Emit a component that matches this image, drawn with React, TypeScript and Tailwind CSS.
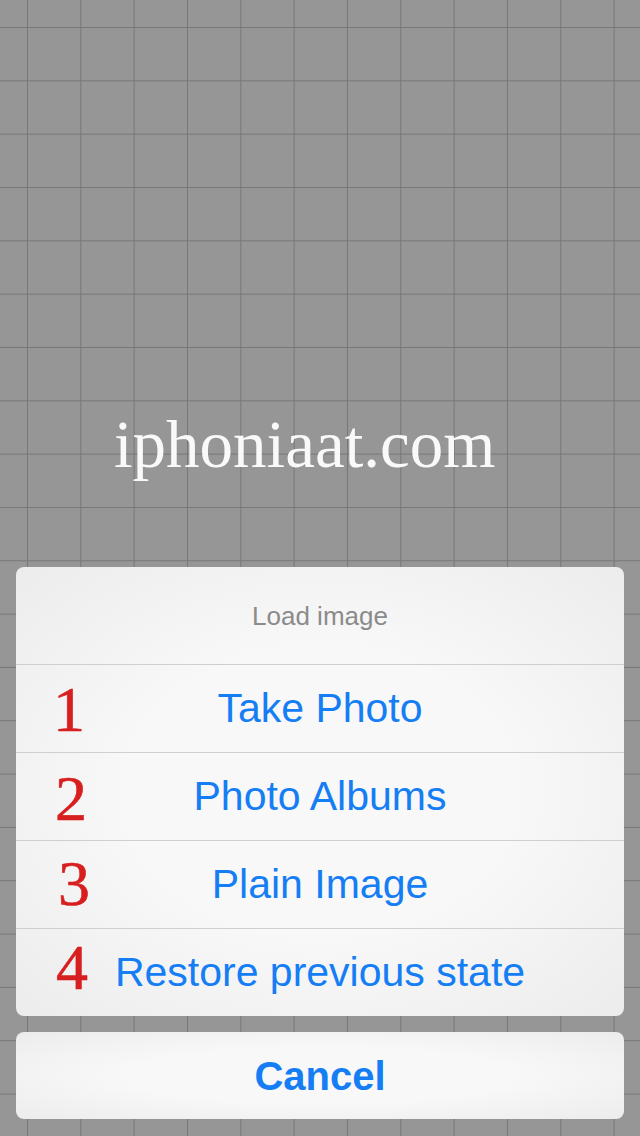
const SANS = "font-['Liberation_Sans','Helvetica_Neue',Arial,sans-serif]";
const SERIF = "font-['Liberation_Serif','Times_New_Roman',serif]";

const ACTIONS = [
  { num: '1', label: 'Take Photo', numClass: 'left-[37px] top-[13px]' },
  { num: '2', label: 'Photo Albums', numClass: 'left-[39px] top-[14px]' },
  { num: '3', label: 'Plain Image', numClass: 'left-[42px] top-[11px]' },
  { num: '4', label: 'Restore previous state', numClass: 'left-[40px] top-[7px]' },
];

const sheetBg =
  'bg-[radial-gradient(ellipse_at_center,#f8f8f8_45%,#ececec_100%)]';

function ActionRow({ num, label, numClass }: { num: string; label: string; numClass: string }) {
  return (
    <div className="relative h-[88px] border-t border-[#cfcfd3] flex items-center justify-center">
      <span className={`text-[41px] leading-none text-[#157ef5] ${SANS}`}>{label}</span>
      {/* red number annotation drawn over the sheet */}
      <span
        className={`absolute ${numClass} text-[64px] leading-none text-[#d71f1f] [-webkit-text-stroke:0.6px_#d71f1f] ${SERIF}`}
      >
        {num}
      </span>
    </div>
  );
}

export default function App() {
  return (
    <div
      className="relative w-[640px] h-[1136px] overflow-hidden flex flex-col bg-[#969696] bg-[linear-gradient(to_right,#777777_1px,transparent_1px),linear-gradient(to_bottom,#777777_1px,transparent_1px)] bg-[size:53.333px_53.333px] bg-[position:27px_27px]"
    >
      {/* watermark */}
      <div className="pt-[411px] pl-[114px]">
        <span className={`text-[67px] leading-none text-[#f9f9f9] ${SERIF}`}>iphoniaat.com</span>
      </div>

      {/* action sheet */}
      <div className="mt-auto px-4 pb-[17px] flex flex-col gap-4">
        <div className={`rounded-[8px] overflow-hidden ${sheetBg}`}>
          <div className="h-[97px] flex items-center justify-center">
            <span className={`text-[26px] leading-none text-[#8b8b8b] ${SANS}`}>Load image</span>
          </div>
          {ACTIONS.map((a) => (
            <ActionRow key={a.num} {...a} />
          ))}
        </div>

        <div className={`h-[87px] rounded-[8px] flex items-center justify-center ${sheetBg}`}>
          <span className={`text-[40px] leading-none font-bold text-[#157ef5] ${SANS}`}>Cancel</span>
        </div>
      </div>
    </div>
  );
}
